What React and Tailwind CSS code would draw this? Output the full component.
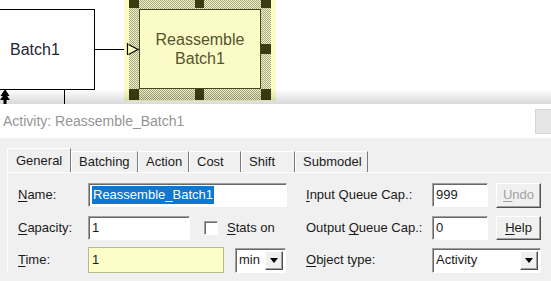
import React from 'react';

const raised = 'border border-white border-b-[#505050] border-r-[#505050] shadow-[inset_-1px_-1px_0_#a0a0a0]';
const sunken = 'border border-[#a0a0a0] border-b-white border-r-white shadow-[inset_1px_1px_0_#696969]';

function U({ children }) {
  return <span className="underline underline-offset-[2px] decoration-1">{children}</span>;
}

function Handle({ className }) {
  return <div className={`absolute bg-[#3b3b12] ${className}`} />;
}

function Canvas() {
  return (
    <div className="relative h-[104px] overflow-hidden bg-white">
      {/* Batch1 block, cut at the left edge */}
      <div className="absolute left-[-1px] top-[9px] w-[96px] h-[81px] border border-black flex items-center pl-[10px] text-[16px] text-[#262636]">
        Batch1
      </div>
      <div className="absolute left-[95px] top-[49px] w-[32px] h-px bg-black" />
      <div className="absolute left-[64px] top-[90px] w-px h-[14px] bg-black" />
      <svg className="absolute left-0 top-[89px]" width="10" height="15" viewBox="0 0 10 15">
        <path d="M5 0 L9.5 7 L6.5 7 L6.5 15 L3.5 15 L3.5 7 L0.5 7 Z" fill="#000" />
        <path d="M5 4 L10 11 L0 11 Z" fill="#000" />
      </svg>

      {/* selected activity */}
      <div className="absolute left-[124px] top-0 w-[152px] h-[101px] bg-[#fafac2]" />
      <div className="absolute left-[129px] top-[-2px] w-[142px] h-[102px] bg-[repeating-conic-gradient(#a4a47c_0_25%,#f6f6cc_0_50%)] bg-[length:2px_2px]" />
      <div className="absolute left-[139px] top-[9px] w-[122px] h-[80px] bg-[#fbfbc8] border border-[#44441a] flex flex-col items-center justify-center text-[16px] leading-[19px] text-[#55552c]">
        <span>Reassemble</span>
        <span>Batch1</span>
      </div>
      <Handle className="left-[129px] top-0 w-[10px] h-[8px]" />
      <Handle className="left-[195px] top-0 w-[9px] h-[8px]" />
      <Handle className="left-[261px] top-0 w-[10px] h-[8px]" />
      <Handle className="left-[261px] top-[44px] w-[10px] h-[10px]" />
      <Handle className="left-[129px] top-[89px] w-[10px] h-[11px]" />
      <Handle className="left-[195px] top-[89px] w-[9px] h-[11px]" />
      <Handle className="left-[261px] top-[89px] w-[10px] h-[11px]" />
      <svg className="absolute left-[126px] top-[43px]" width="14" height="13" viewBox="0 0 14 13">
        <path d="M1.5 0 V12" stroke="#000" strokeWidth="1.2" />
        <path d="M2.5 1.5 L12 6.5 L2.5 11.5" fill="#fafac2" stroke="#000" strokeWidth="1.2" />
      </svg>

      <div className="absolute left-0 right-0 bottom-0 h-[15px] bg-gradient-to-b from-black/0 to-black/15" />
    </div>
  );
}

function Tab({ label, w, active }) {
  return (
    <div
      className={`${w} flex items-center pl-[7px] border-t border-l border-white border-r border-r-[#7a7a7a] bg-[#f0f0f0] text-[13px] ${
        active ? 'h-[24px] pl-[8px]' : 'h-[21px]'
      }`}
    >
      {label}
    </div>
  );
}

function Arrow() {
  return (
    <div className={`w-[18px] h-full bg-[#f0f0f0] flex items-center justify-center ${raised}`}>
      <svg width="8" height="5" viewBox="0 0 8 5">
        <path d="M0 0 H8 L4 5 Z" fill="#000" />
      </svg>
    </div>
  );
}

function Dialog() {
  return (
    <div>
      <div className="relative h-[34px] bg-white flex items-center pl-[3px] text-[14px] text-[#959595]">
        Activity: Reassemble_Batch1
        <div className="absolute left-[535px] top-[5px] w-[20px] h-[25px] bg-[#e6e6e6] border border-[#d6d6d6]" />
      </div>
      <div className="h-[143px] bg-[#f0f0f0]">
        <div className="flex items-end pl-[7px] pt-[10px]">
          <Tab label="General" w="w-[64px]" active />
          <Tab label="Batching" w="w-[67px]" />
          <Tab label="Action" w="w-[51px]" />
          <Tab label="Cost" w="w-[52px]" />
          <Tab label="Shift" w="w-[54px]" />
          <Tab label="Submodel" w="w-[73px]" />
        </div>
        <div className="ml-[7px] border-t border-l border-white text-[13px] text-[#1a1a1a]">
          {/* row 1 */}
          <div className="flex items-center h-[24px] mt-[10px] pl-[10px]">
            <div className="w-[70px]"><U>N</U>ame:</div>
            <div className="w-[218px] h-full flex">
              <div className={`w-[199px] h-full bg-white flex items-center pl-[3px] ${sunken}`}>
                <span className="bg-[#0a78d7] text-white px-[1px] leading-[18px]">Reassemble_Batch1</span>
              </div>
            </div>
            <div className="w-[126px]"><U>I</U>nput Queue Cap.:</div>
            <div className={`w-[56px] h-full bg-white flex items-center pl-[3px] ${sunken}`}>999</div>
            <div className={`ml-[8px] w-[45px] h-[25px] flex items-center justify-center text-[#a0a0a0] ${raised}`}>
              <U>U</U>ndo
            </div>
          </div>
          {/* row 2 */}
          <div className="flex items-center h-[24px] mt-[9px] pl-[10px]">
            <div className="w-[70px]"><U>C</U>apacity:</div>
            <div className="w-[218px] h-full flex items-center">
              <div className={`w-[102px] h-full bg-white flex items-center pl-[3px] ${sunken}`}>1</div>
              <div className={`ml-[14px] w-[14px] h-[14px] bg-white ${sunken}`} />
              <div className="ml-[9px]"><U>S</U>tats on</div>
            </div>
            <div className="w-[126px]">Output <U>Q</U>ueue Cap.:</div>
            <div className={`w-[56px] h-full bg-white flex items-center pl-[3px] ${sunken}`}>0</div>
            <div className={`ml-[8px] w-[45px] h-full flex items-center justify-center ${raised}`}>
              <U>H</U>elp
            </div>
          </div>
          {/* row 3 */}
          <div className="flex items-center h-[26px] mt-[7px] pl-[10px]">
            <div className="w-[70px]"><U>T</U>ime:</div>
            <div className="w-[218px] h-full flex items-center">
              <div className="w-[136px] h-full bg-[#fdfdc9] border border-[#b8b88a] flex items-center pl-[3px]">1</div>
              <div className={`ml-[11px] w-[51px] h-[25px] bg-white flex items-center justify-between pl-[3px] pr-[2px] ${sunken}`}>
                min
                <div className="h-[19px]"><Arrow /></div>
              </div>
            </div>
            <div className="w-[126px]"><U>O</U>bject type:</div>
            <div className={`w-[109px] h-[25px] bg-white flex items-center justify-between pl-[3px] pr-[2px] ${sunken}`}>
              Activity
              <div className="h-[19px]"><Arrow /></div>
            </div>
          </div>
        </div>
      </div>
    </div>
  );
}

export default function App() {
  return (
    <div className="w-[551px] h-[281px] overflow-hidden bg-white font-['Liberation_Sans',Arial,sans-serif] text-[#1a1a1a]">
      <Canvas />
      <Dialog />
    </div>
  );
}
